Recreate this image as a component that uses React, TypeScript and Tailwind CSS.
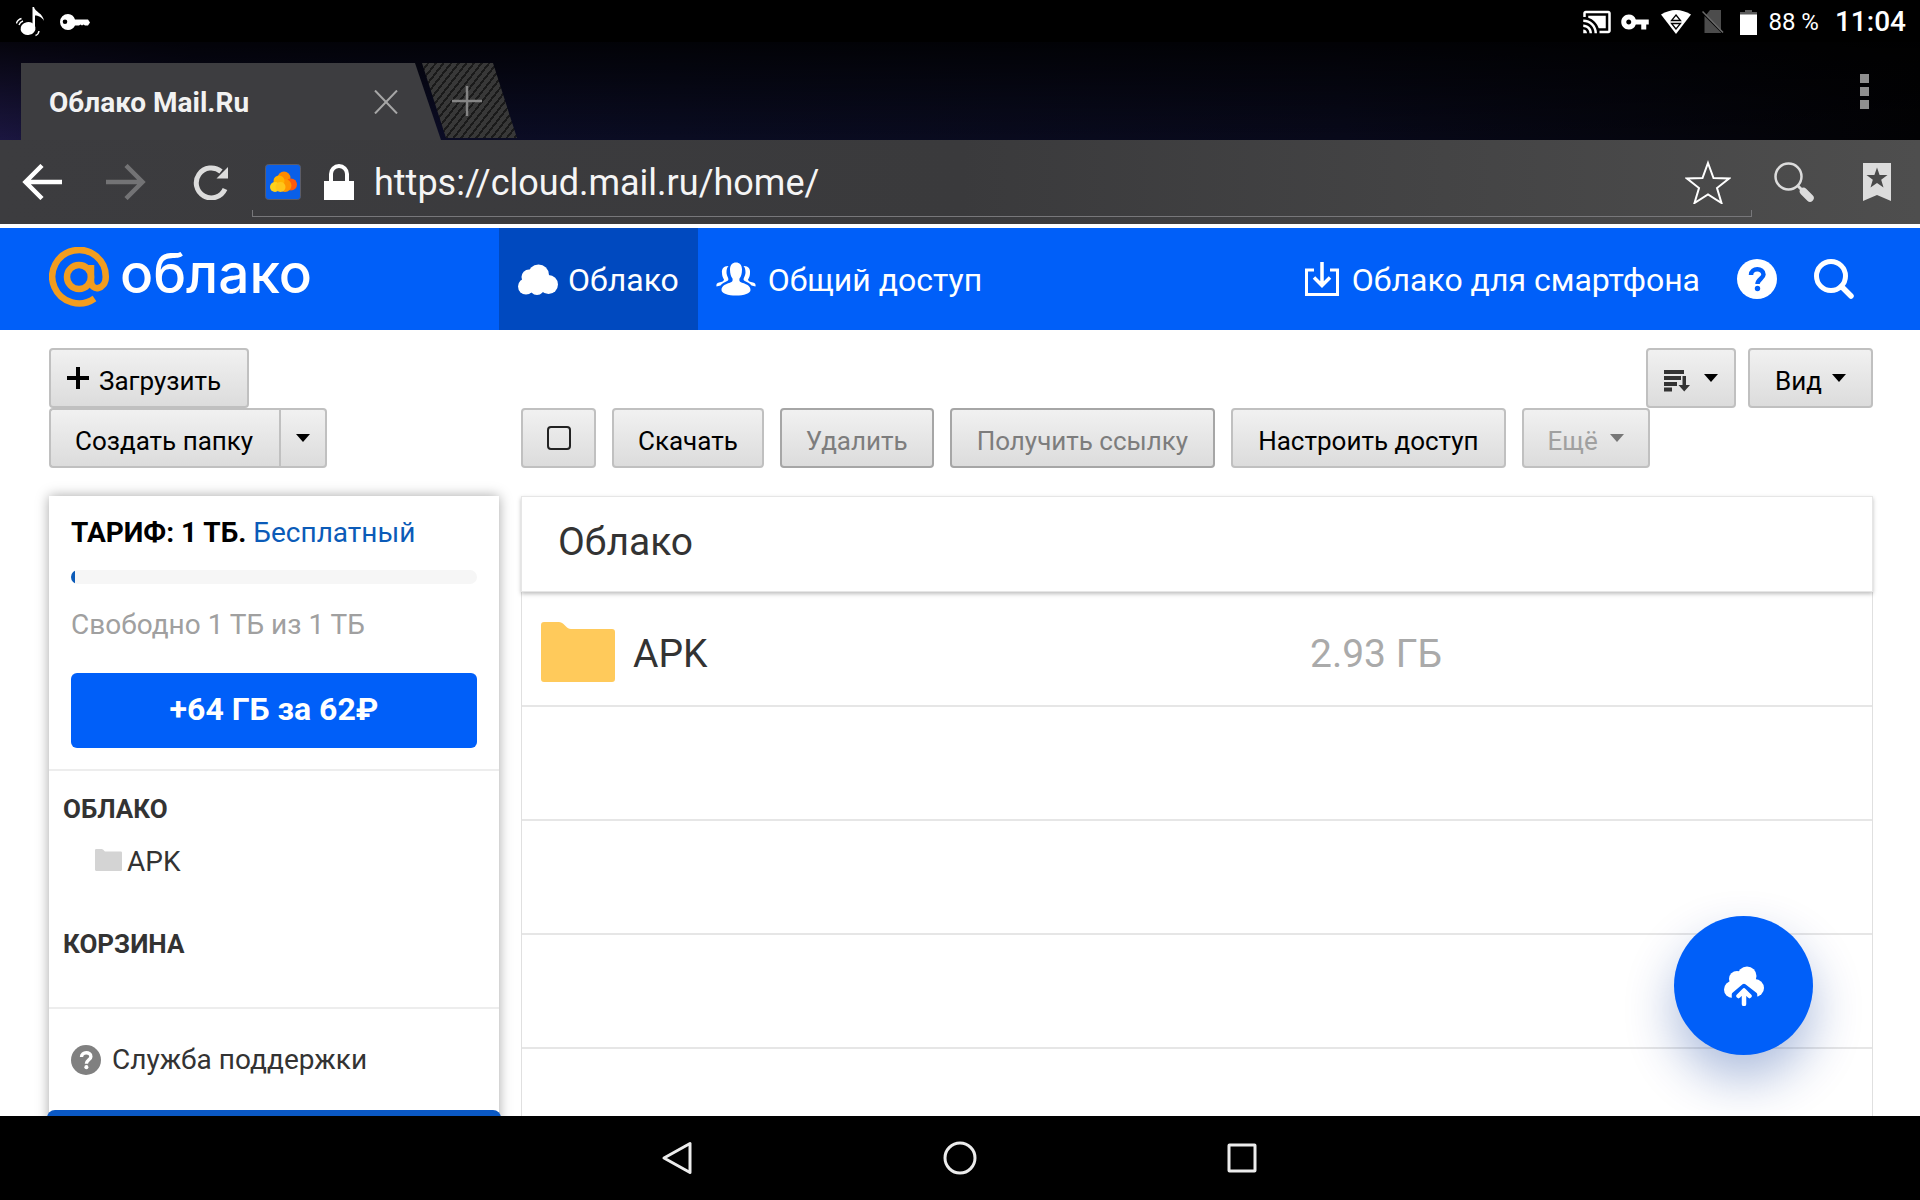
import React from 'react';
import { MdCastConnected, MdVpnKey } from 'react-icons/md';

const LARGE_FONT = "font-['Roboto','Noto_Sans',sans-serif]";

const BTN_BASE =
  'h-[60px] rounded-[4px] border-2 bg-gradient-to-b from-[#f1f1f1] to-[#dcdcdc] text-[26px] leading-8 flex items-center justify-center shrink-0 whitespace-nowrap';

const Caret: React.FC<{ className?: string }> = ({ className = '' }) => (
  <svg viewBox="0 0 14 8" className={`w-3.5 h-2 shrink-0 ${className}`} fill="currentColor">
    <path d="M0 0H14L7 8Z" />
  </svg>
);

interface ToolButtonProps {
  label: string;
  disabled?: boolean;
  className?: string;
}

const ToolButton: React.FC<ToolButtonProps> = ({ label, disabled, className = 'px-6' }) => (
  <button
    type="button"
    disabled={disabled}
    className={`${BTN_BASE} ${disabled ? 'border-[#a6a6a6] text-[#7d7d7d]' : 'border-[#c0c0c0] text-black'} ${className}`}
  >
    <span className="pt-1.5">{label}</span>
  </button>
);

const StatusBar: React.FC = () => (
  <div className="h-[42px] bg-black text-white flex items-center justify-between shrink-0 pl-4 pr-3.5 pt-0.5">
    <div className="flex items-center gap-3">
      <svg viewBox="0 0 32 32" className="w-8 h-8" fill="#fff">
        <ellipse cx="12" cy="22.500" rx="7.500" ry="6.500" transform="rotate(-12 12 22.500)" />
        <path d="M16.500 1H18C19 6 27 7 28 15C26 11 22 9.500 19 9.500V22H16.500Z" />
        <path d="M0.500 17.500Q1 14 5.500 12.500M3 19Q4 16 7 15M19.500 29.500Q22.500 28.500 23 25" fill="none" stroke="#fff" strokeWidth="1.400" />
      </svg>
      <svg viewBox="0 0 30 18" className="w-[30px] h-[18px]" fill="#fff">
        <path fillRule="evenodd" d="M8 1A8 8 0 1 0 8 17A8 8 0 0 0 15 12.500H19L20.500 11.500L22 12.500L23.500 11.500L25 12.500H28L30 9.500L28 6.500H15A8 8 0 0 0 8 1ZM5 6.500A2.300 2.300 0 1 1 5 11.100A2.300 2.300 0 0 1 5 6.500Z" />
      </svg>
    </div>
    <div className="flex items-center">
      <MdCastConnected className="w-[30px] h-[30px]" />
      <MdVpnKey className="w-[30px] h-[30px] ml-2" />
      <svg viewBox="0 0 30 24" className="w-[30px] h-6 ml-[11px]">
        <path d="M0 4.500Q15 -4.500 30 4.500L15 24Z" fill="#fff" />
        <path d="M15 5L19.500 10.500H10.500ZM15 19L10.500 13.500H19.500Z" fill="#fff" stroke="#000" strokeWidth="1.300" />
      </svg>
      <svg viewBox="0 0 22 24" className="w-[22px] h-6 ml-[11px]">
        <path d="M8 0H19V20L4 5Z" fill="#4c4c4c" />
        <path d="M2.500 6L19 22.500V23H2.500Z" fill="#4c4c4c" />
        <path d="M0.500 1.500L21 22.500" stroke="#6b6b6b" strokeWidth="1.500" />
      </svg>
      <svg viewBox="0 0 17 25" className="w-[17px] h-[25px] ml-4">
        <path d="M5 0H12V2H17V5H0V2H5Z" fill="#5a5a5a" />
        <path d="M0 4.500H17V25H0Z" fill="#fff" />
      </svg>
      <span className="text-2xl leading-7 ml-[11px]">88 %</span>
      <span className="text-[28px] leading-8 font-medium ml-4">11:04</span>
    </div>
  </div>
);

const TabStrip: React.FC = () => (
  <div className="h-[98px] shrink-0 flex items-end justify-between bg-[linear-gradient(to_bottom,rgba(0,0,0,0.8),rgba(0,0,0,0)),linear-gradient(to_right,#1b1640,#0d0d2a_10%,#0a0c22_35%,#08091a_70%,#020204)] pl-[21px] pr-[51px]">
    <div className="flex items-end">
      <div className="w-[420px] h-[77px] bg-[#3d3d40] [clip-path:polygon(0_0,394px_0,420px_100%,0_100%)] flex items-center pl-7">
        <span className="flex-1 text-[28px] leading-8 font-bold text-[#f2f2f2] pt-0.5">Облако Mail.Ru</span>
        <button type="button" aria-label="Закрыть вкладку" className="mr-[43px]">
          <svg viewBox="0 0 24 24" className="w-6 h-6" stroke="#a6a6a6" strokeWidth="2">
            <path d="M1 0.500L23 23.500M23 0.500L1 23.500" />
          </svg>
        </button>
      </div>
      <button
        type="button"
        aria-label="Новая вкладка"
        className="-ml-[19px] mb-0.5 w-[95px] h-[75px] pr-1.5 flex items-center justify-center [clip-path:polygon(0_0,71px_0,95px_100%,24px_100%)] bg-[repeating-linear-gradient(128deg,#383838_0px,#383838_4px,#1a1a1a_4px,#1a1a1a_6px)]"
      >
        <svg viewBox="0 0 30 30" className="w-[30px] h-[30px]" stroke="#858585" strokeWidth="2.500">
          <path d="M15 0V30M0 15H30" />
        </svg>
      </button>
    </div>
    <button type="button" aria-label="Меню" className="self-center flex flex-col gap-1">
      <span className="w-[9px] h-[9px] bg-[#8f8f8f]" />
      <span className="w-[9px] h-[9px] bg-[#8f8f8f]" />
      <span className="w-[9px] h-[9px] bg-[#8f8f8f]" />
    </button>
  </div>
);

const AddressBar: React.FC = () => (
  <div className="h-[84px] shrink-0 flex items-center bg-gradient-to-r from-[#3c3c3f] via-[#3a3a3c] to-[#4e4e4e] pl-[22px] pr-7">
    <button type="button" aria-label="Назад">
      <svg viewBox="0 0 40 36" className="w-10 h-9" fill="none" stroke="#fff" strokeWidth="4.500">
        <path d="M40 18H4M20 1.500L3.500 18L20 34.500" />
      </svg>
    </button>
    <button type="button" aria-label="Вперёд" className="ml-11">
      <svg viewBox="0 0 40 36" className="w-10 h-9" fill="none" stroke="#737375" strokeWidth="4.500">
        <path d="M0 18H36M20 1.500L36.500 18L20 34.500" />
      </svg>
    </button>
    <button type="button" aria-label="Обновить" className="ml-[47px]">
      <svg viewBox="0 0 36 36" className="w-9 h-9">
        <path d="M32 25A15 15 0 1 1 28 7.500" fill="none" stroke="#dcdcdc" strokeWidth="5" />
        <path d="M35 3V14.500H23.500Z" fill="#dcdcdc" />
      </svg>
    </button>
    <div className="flex-1 self-stretch flex flex-col ml-[23px]">
      <div className="flex-1 flex items-center pl-[13px] pt-3.5">
        <svg viewBox="0 0 36 36" className="w-9 h-9 shrink-0">
          <rect x="0.500" y="0.500" width="35" height="35" rx="3" fill="#0a5fe8" stroke="#5c5c66" />
          <circle cx="19" cy="14" r="6.500" fill="#ff8a00" />
          <circle cx="26" cy="20.500" r="6" fill="#ff5a0a" />
          <circle cx="20" cy="21.500" r="6.500" fill="#ff9500" />
          <circle cx="14" cy="17" r="5.500" fill="#ffb300" />
          <circle cx="10" cy="23" r="5" fill="#ffd21a" />
          <circle cx="15.500" cy="23" r="5" fill="#ffc61a" />
        </svg>
        <svg viewBox="0 0 30 36" className="w-[30px] h-9 ml-[23px] shrink-0">
          <path d="M7 19V10A8 8 0 0 1 23 10V19" fill="none" stroke="#fff" strokeWidth="4" />
          <rect y="17" width="30" height="19" fill="#fff" />
        </svg>
        <input
          type="text"
          aria-label="Адрес"
          defaultValue="https://cloud.mail.ru/home/"
          className="flex-1 h-12 ml-5 pt-0.5 bg-transparent outline-none text-4xl leading-[48px] text-[#f5f5f5]"
        />
        <button type="button" aria-label="В закладки" className="mr-[21px]">
          <svg viewBox="0 0 46 44" className="w-[46px] h-11" fill="none" stroke="#fff" strokeWidth="2">
            <path d="M23 3L28.500 18L44 18.500L32 28L36.500 43L23 34.500L9.500 43L14 28L2 18.500L17.500 18Z" />
          </svg>
        </button>
      </div>
      <div className="h-[7px] mb-[7px] border border-t-0 border-[#77777a]" />
    </div>
    <button type="button" aria-label="Поиск" className="ml-[21px]">
      <svg viewBox="0 0 42 42" className="w-[42px] h-[42px]" fill="none" stroke="#dcdcdc">
        <circle cx="15.500" cy="15.500" r="13" strokeWidth="2.500" />
        <path d="M24.500 24.500L29 29" strokeWidth="3" />
        <path d="M30.500 30.500L37 37" strokeWidth="7.500" strokeLinecap="round" />
      </svg>
    </button>
    <button type="button" aria-label="Закладки" className="ml-[47px]">
      <svg viewBox="0 0 30 38" className="w-[30px] h-[38px]">
        <path d="M1 0H29V38L15 32L1 38Z" fill="#dcdcdc" />
        <path d="M15 4.500L17.600 12H25.500L19.200 16.800L21.500 24.500L15 20L8.500 24.500L10.800 16.800L4.500 12H12.400Z" fill="#4a4a4a" />
      </svg>
    </button>
  </div>
);

const HelpIcon: React.FC<{ className: string; mark: string }> = ({ className, mark }) => (
  <svg viewBox="0 0 40 40" className={className}>
    <circle cx="20" cy="20" r="20" fill="currentColor" />
    <path d="M14 16C14 8.500 26.500 8.500 26.500 15.500C26.500 19.500 20.500 20 20.500 25" fill="none" stroke={mark} strokeWidth="4.500" />
    <circle cx="20.500" cy="29.500" r="2.700" fill={mark} />
  </svg>
);

const SiteHeader: React.FC = () => (
  <header className="h-[102px] mt-1 shrink-0 bg-[#005ff9] text-white text-[32px] leading-10 flex pl-[49px] pr-[66px]">
    <a href="#home" className="w-[450px] shrink-0 flex items-center pb-1">
      <svg viewBox="0 0 60 60" className="w-[60px] h-[60px]" fill="none" stroke="#f39d1e" strokeWidth="6.500">
        <circle cx="30" cy="30" r="12" />
        <path d="M42 18V34C42 45 56.750 43 56.750 30A26.750 26.750 0 1 0 45.500 51.500" />
      </svg>
      <span className="font-['Inter','Noto_Sans',sans-serif] font-medium text-[55px] leading-[60px] ml-[11px] pb-2">облако</span>
    </a>
    <nav className="flex">
      <a href="#cloud" className="bg-[#0049bf] flex items-center pl-[19px] pr-[19px]">
        <svg viewBox="0 0 40 31" className="w-10 h-[31px]" fill="#fff">
          <circle cx="20.500" cy="11" r="10.500" />
          <circle cx="11" cy="13" r="7.500" />
          <circle cx="8" cy="22.500" r="8" />
          <circle cx="30.500" cy="20.500" r="9.500" />
          <rect x="8" y="14" width="23" height="14" />
          <circle cx="19" cy="23.500" r="7.500" />
        </svg>
        <span className="ml-2.5 pt-0.5">Облако</span>
      </a>
      <a href="#shared" className="flex items-center pl-[18px]">
        <svg viewBox="0 0 40 34" className="w-10 h-[34px]" fill="#fff">
          <path d="M14 7.500C14 3 16.500 0.500 20 0.500S26 3 26 7.500C26 12 25 14.500 23.500 16.500C23 19.500 24 20 27 21C31 22.500 34.500 24 34.500 28C34.500 31.500 28 33.500 20 33.500S5.500 31.500 5.500 28C5.500 24 9 22.500 13 21C16 20 17 19.500 16.500 16.500C15 14.500 14 12 14 7.500Z" />
          <path d="M12 4C7.500 4 5.500 7 6 11C6 14 7 16 8 17.500C8 19 6 20 3 20.500C1 21 0 22 0.500 24.500L4.500 23.500C6 21.500 9 20 12 18.500C13.500 17 10.500 14 10.500 10.500C10.500 7.500 11 5.500 12.500 4Z" />
          <path d="M28 4C32.500 4 34.500 7 34 11C34 14 33 16 32 17.500C32 19 34 20 37 20.500C39 21 40 22 39.500 24.500L35.500 23.500C34 21.500 31 20 28 18.500C26.500 17 29.500 14 29.500 10.500C29.500 7.500 29 5.500 27.500 4Z" />
        </svg>
        <span className="ml-3 pt-0.5">Общий доступ</span>
      </a>
    </nav>
    <div className="ml-auto flex items-center">
      <a href="#mobile" className="flex items-center">
        <svg viewBox="0 0 34 34" className="w-[34px] h-[34px]" fill="none" stroke="#fff" strokeWidth="3">
          <path d="M9 8H1.500V32.500H32.500V8H25" />
          <path d="M17 0V22M9 15.500L17 23.500L25 15.500" strokeWidth="3.500" />
        </svg>
        <span className="ml-[13px] pt-0.5">Облако для смартфона</span>
      </a>
      <button type="button" aria-label="Помощь" className="ml-[37px]">
        <HelpIcon className="w-10 h-10 text-white" mark="#005ff9" />
      </button>
      <button type="button" aria-label="Найти" className="ml-[37px]">
        <svg viewBox="0 0 40 40" className="w-10 h-10" fill="none" stroke="#fff" strokeWidth="5">
          <circle cx="17" cy="17" r="14.500" />
          <path d="M27.500 27.500L37 37" strokeWidth="5.500" strokeLinecap="round" />
        </svg>
      </button>
    </div>
  </header>
);

const Toolbar: React.FC = () => (
  <div className="flex gap-[22px] pt-[18px] pb-7">
    <div className="w-[450px] shrink-0 flex flex-col items-start">
      <button type="button" className={`${BTN_BASE} border-[#c0c0c0] text-black pl-4 pr-[26px]`}>
        <svg viewBox="0 0 22 22" className="w-[22px] h-[22px]" stroke="#000" strokeWidth="4">
          <path d="M11 0V22M0 11H22" />
        </svg>
        <span className="ml-2.5 pt-1.5">Загрузить</span>
      </button>
      <div className="flex">
        <ToolButton label="Создать папку" className="pl-6 pr-[26px] rounded-r-none border-r-0" />
        <button type="button" aria-label="Создать ещё" className={`${BTN_BASE} w-12 border-[#c0c0c0] text-black rounded-l-none`}>
          <Caret />
        </button>
      </div>
    </div>
    <div className="flex-1 flex flex-col">
      <div className="flex justify-end gap-3">
        <button type="button" aria-label="Сортировка" className={`${BTN_BASE} border-[#c0c0c0] text-black px-4 gap-3.5`}>
          <svg viewBox="0 0 26 22" className="w-[26px] h-[22px] mt-1.5" fill="#333">
            <path d="M0 0H20V4H0ZM0 6H17V10H0ZM0 12H13V16H0ZM0 17.500H8V21.500H0Z" />
            <path d="M18.500 6H22V15H26L20.250 21.500L14.500 15H18.500Z" />
          </svg>
          <Caret />
        </button>
        <button type="button" className={`${BTN_BASE} border-[#c0c0c0] text-black px-[25px] gap-2.5`}>
          <span className="pt-1.5">Вид</span>
          <Caret />
        </button>
      </div>
      <div className="flex gap-4">
        <label className={`${BTN_BASE} border-[#c0c0c0] w-[75px]`}>
          <input type="checkbox" aria-label="Выбрать всё" className="appearance-none w-6 h-6 rounded-[4px] border-2 border-[#222]" />
        </label>
        <ToolButton label="Скачать" />
        <ToolButton label="Удалить" disabled />
        <ToolButton label="Получить ссылку" disabled className="px-[25px]" />
        <ToolButton label="Настроить доступ" className="px-[25px]" />
        <button type="button" disabled className={`${BTN_BASE} border-[#c0c0c0] text-[#a0a0a0] px-6 gap-3`}>
          <span className="pt-1.5">Ещё</span>
          <Caret className="text-[#777]" />
        </button>
      </div>
    </div>
  </div>
);

const FolderIcon: React.FC<{ className: string }> = ({ className }) => (
  <svg viewBox="0 0 74 60" className={className} fill="currentColor">
    <path d="M3 0H18C21 0 23 2.500 25 4.500C26.500 6 27.500 7 30 7H71Q74 7 74 10V57Q74 60 71 60H3Q0 60 0 57V3Q0 0 3 0Z" />
  </svg>
);

const Sidebar: React.FC = () => (
  <aside className="w-[450px] shrink-0 self-start bg-white shadow-[0_0_12px_rgba(0,0,0,0.35)] text-[28px] leading-8 text-[#333]">
    <section className="px-[22px] pt-[21px] pb-[21px] border-b-2 border-[#ededed]">
      <p className="text-black">
        <b>ТАРИФ: 1 ТБ.</b>{' '}
        <a href="#tariff" className="text-[#0b5bb8]">Бесплатный</a>
      </p>
      <div role="progressbar" aria-valuenow={1} className="mt-[21px] h-3.5 rounded-full bg-[#f6f6f6] overflow-hidden">
        <div className="w-1 h-full bg-[#0b5bb8]" />
      </div>
      <p className="mt-[25px] text-[#a0a0a0]">Свободно 1 ТБ из 1 ТБ</p>
      <button type="button" className="mt-8 w-full h-[75px] rounded-md bg-[#005ff9] text-white font-bold text-[32px] leading-10 pb-1">
        +64 ГБ за 62₽
      </button>
    </section>
    <nav className="px-3.5 pt-[22px] pb-[47px] border-b-2 border-[#ededed]">
      <a href="#root" className="block font-bold text-[26px]">ОБЛАКО</a>
      <a href="#apk" className="mt-[21px] pl-8 flex items-center gap-[5px]">
        <FolderIcon className="w-[27px] h-[22px] text-[#d4d4d4] mb-1" />
        APK
      </a>
      <a href="#trash" className="mt-[50px] block font-bold text-[26px]">КОРЗИНА</a>
    </nav>
    <a href="#support" className="h-[101px] px-[22px] flex items-center gap-[11px]">
      <HelpIcon className="w-[30px] h-[30px] text-[#808080]" mark="#fff" />
      Служба поддержки
    </a>
    <div className="-mx-0.5 h-20 rounded-lg bg-[#0a58c4]" />
  </aside>
);

const FileList: React.FC = () => (
  <section className="flex-1 self-start border-x border-[#e0e0e0]">
    <h1 className="-mx-px h-24 pl-9 pb-1 flex items-center border border-[#e6e6e6] bg-white shadow-[0_2px_4px_rgba(0,0,0,0.25)] text-[39px] leading-[48px] text-[#333]">
      Облако
    </h1>
    <table className="w-full border-separate border-spacing-0 text-[39px] leading-[48px]">
      <tbody>
        <tr>
          <td className="h-[115px] border-b-2 border-[#e6e6e6] pl-[19px] pt-1.5">
            <a href="#apk" className="flex items-center gap-[18px] text-[#333]">
              <FolderIcon className="w-[74px] h-[60px] text-[#ffca5b]" />
              <span className="pt-1">APK</span>
            </a>
          </td>
          <td className="w-[562px] h-[115px] border-b-2 border-[#e6e6e6] pt-2.5 text-[#aaa]">2.93 ГБ</td>
        </tr>
        {[1, 2, 3, 4].map((row) => (
          <tr key={row}>
            <td colSpan={2} className="h-[114px] border-b-2 border-[#e6e6e6]" />
          </tr>
        ))}
      </tbody>
    </table>
  </section>
);

const SystemNav: React.FC = () => (
  <nav className="h-[84px] shrink-0 bg-black flex items-center justify-center gap-[250px] pr-0.5">
    <button type="button" aria-label="Назад">
      <svg viewBox="0 0 32 34" className="w-8 h-[34px]" fill="none" stroke="#ececec" strokeWidth="3" strokeLinejoin="round">
        <path d="M29 2.500V31.500L3 17Z" />
      </svg>
    </button>
    <button type="button" aria-label="Домой">
      <svg viewBox="0 0 34 34" className="w-[34px] h-[34px]" fill="none" stroke="#ececec" strokeWidth="3">
        <circle cx="17" cy="17" r="15" />
      </svg>
    </button>
    <button type="button" aria-label="Недавние">
      <svg viewBox="0 0 30 30" className="w-[30px] h-[30px]" fill="none" stroke="#ececec" strokeWidth="3">
        <rect x="2" y="2" width="26" height="26" rx="0.500" />
      </svg>
    </button>
  </nav>
);

const App: React.FC = () => {
  return (
    <div className={`h-screen flex flex-col overflow-hidden bg-white ${LARGE_FONT}`}>
      <StatusBar />
      <TabStrip />
      <AddressBar />
      <SiteHeader />
      <main className="relative flex-1 min-h-0 overflow-hidden pl-[49px] pr-[47px]">
        <Toolbar />
        <div className="flex gap-[22px]">
          <Sidebar />
          <FileList />
        </div>
        {/* Floating upload button */}
        <button
          type="button"
          aria-label="Загрузить файл"
          className="absolute right-[107px] bottom-[61px] w-[139px] h-[139px] rounded-full bg-[#005ff9] shadow-[0_24px_50px_rgba(0,50,150,0.32)] flex items-center justify-center"
        >
          <svg viewBox="0 0 40 40" className="w-10 h-10">
            <g fill="#fff">
              <circle cx="23" cy="10" r="9.500" />
              <circle cx="13" cy="13" r="8" />
              <circle cx="8.500" cy="23.500" r="8.500" />
              <circle cx="31" cy="22" r="9" />
              <rect x="9" y="11" width="22" height="14" />
            </g>
            <path d="M20 20L10 28.500V40H31V28.500Z" fill="#005ff9" stroke="#005ff9" strokeWidth="4.500" strokeLinejoin="round" />
            <path d="M20 25V38M14.500 30L20 24.500L25.500 30" fill="none" stroke="#fff" strokeWidth="4.500" strokeLinecap="round" strokeLinejoin="round" />
          </svg>
        </button>
      </main>
      <SystemNav />
    </div>
  );
};

export default App;
